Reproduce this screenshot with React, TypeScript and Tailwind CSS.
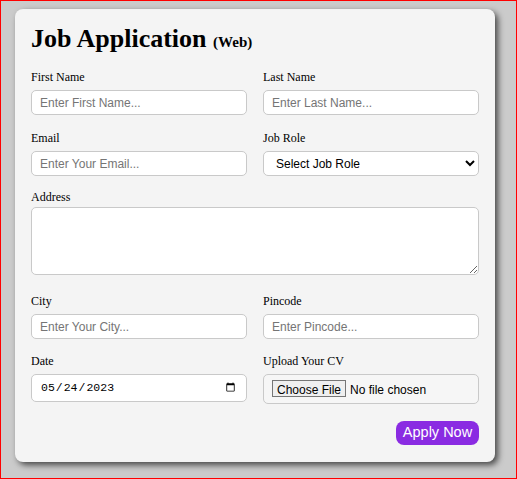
import React from "react"

const inputCls =
  "block w-full h-[25px] rounded-[5px] border border-[#c9c9c9] bg-white px-2 text-[12px] font-['Liberation_Sans',Arial,sans-serif] text-black outline-none placeholder:text-[#757575]"

function Label({ children, className = "" }: { children: React.ReactNode; className?: string }) {
  return (
    <label className={"block h-[14px] text-[12px] leading-[14px] text-black " + className}>
      {children}
    </label>
  )
}

function Field({
  label,
  placeholder,
  type = "text",
}: {
  label: string
  placeholder: string
  type?: string
}) {
  return (
    <div className="flex flex-col">
      <Label className="mb-[6px]">{label}</Label>
      <input type={type} placeholder={placeholder} className={inputCls} />
    </div>
  )
}

export default function App() {
  return (
    <div className="h-[479px] w-full border border-[#ff0000] bg-[#cbcbcb] pl-[14px] pt-[8px] font-['Liberation_Serif','Times_New_Roman',serif]">
      <form
        className="w-[480px] rounded-[8px] bg-[#f4f4f4] px-4 pt-4 pb-[17px] shadow-[3px_3px_6px_rgba(0,0,0,0.65)]"
        onSubmit={(e) => e.preventDefault()}
      >
        <h2 className="h-[27px] text-[26px] font-bold leading-[27px] text-black">
          Job Application <span className="text-[15px]">(Web)</span>
        </h2>

        <div className="mt-[18px] grid grid-cols-2 gap-x-4">
          <Field label="First Name" placeholder="Enter First Name..." />
          <Field label="Last Name" placeholder="Enter Last Name..." />
        </div>

        <div className="mt-[16px] grid grid-cols-2 gap-x-4">
          <Field label="Email" placeholder="Enter Your Email..." type="email" />
          <div className="flex flex-col">
            <Label className="mb-[6px]">Job Role</Label>
            <select className={inputCls} defaultValue="">
              <option value="">Select Job Role</option>
              <option value="frontend">Frontend Developer</option>
              <option value="backend">Backend Developer</option>
              <option value="fullstack">Full Stack Developer</option>
            </select>
          </div>
        </div>

        <div className="mt-[14px] flex flex-col">
          <Label className="mb-[3px]">Address</Label>
          <textarea className="block h-[68px] w-full rounded-[5px] border border-[#c9c9c9] bg-white px-2 py-1 text-[12px] font-['Liberation_Sans',Arial,sans-serif] outline-none" />
        </div>

        <div className="mt-[19px] grid grid-cols-2 gap-x-4">
          <Field label="City" placeholder="Enter Your City..." />
          <Field label="Pincode" placeholder="Enter Pincode..." />
        </div>

        <div className="mt-[15px] grid grid-cols-2 items-start gap-x-4">
          <div className="flex flex-col">
            <Label className="mb-[6px]">Date</Label>
            <input
              type="date"
              defaultValue="2023-05-24"
              className="block h-[28px] w-full rounded-[5px] border border-[#c9c9c9] bg-white px-2 text-[11.5px] font-['Liberation_Mono',monospace] text-black outline-none"
            />
          </div>
          <div className="flex flex-col">
            <Label className="mb-[6px]">Upload Your CV</Label>
            <input
              type="file"
              className="block h-[30px] w-full rounded-[5px] border border-[#c9c9c9] bg-[#f6f6f6] px-2 py-[5px] text-[12px] font-['Liberation_Sans',Arial,sans-serif] text-black outline-none file:mr-[4px] file:h-[17px] file:border file:border-[#767676] file:bg-[#efefef] file:px-[4px] file:text-black"
            />
          </div>
        </div>

        <div className="mt-[17px] flex justify-end">
          <button
            type="submit"
            className="flex h-[24px] w-[83px] items-center justify-center rounded-[8px] bg-[#8a2be2] text-[14.5px] font-['Liberation_Sans',Arial,sans-serif] text-white"
          >
            Apply Now
          </button>
        </div>
      </form>
    </div>
  )
}
